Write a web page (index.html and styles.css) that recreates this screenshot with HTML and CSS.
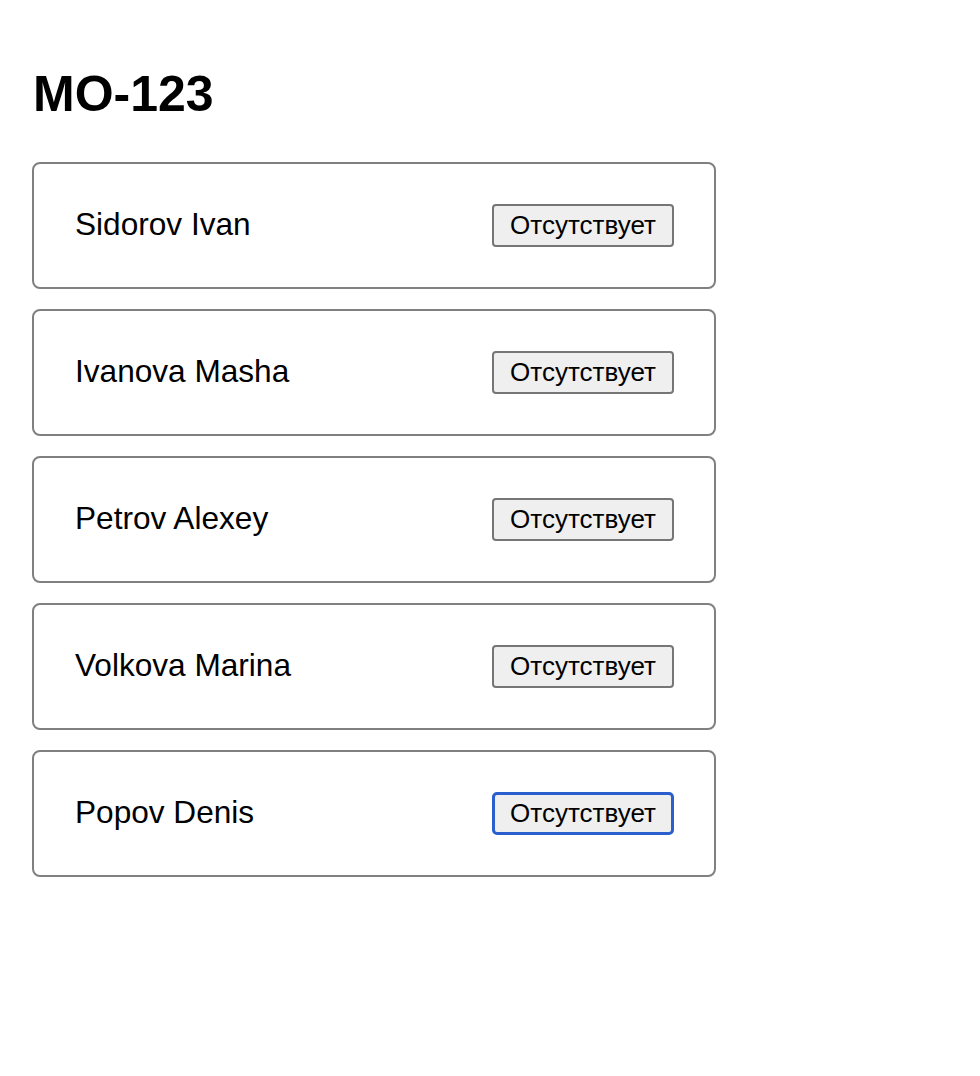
FILE: index.html
```html
<!DOCTYPE html>
<html lang="ru">
<head>
<meta charset="utf-8">
<title>MO-123</title>
<link rel="stylesheet" href="styles.css">
</head>
<body>
<main class="page">
  <h1 class="title">MO-123</h1>
  <ul class="list">
    <li class="card"><span class="name">Sidorov Ivan</span><button class="btn">Отсутствует</button></li>
    <li class="card"><span class="name">Ivanova Masha</span><button class="btn">Отсутствует</button></li>
    <li class="card"><span class="name">Petrov Alexey</span><button class="btn">Отсутствует</button></li>
    <li class="card"><span class="name">Volkova Marina</span><button class="btn">Отсутствует</button></li>
    <li class="card"><span class="name">Popov Denis</span><button class="btn btn-focus">Отсутствует</button></li>
  </ul>
</main>
</body>
</html>
```

FILE: styles.css
```css
html, body {
  margin: 0;
  padding: 0;
  background: #fff;
}
body {
  font-family: "Liberation Sans", Arial, sans-serif;
  color: #000;
}
.page {
  padding: 66px 32px 32px;
  width: 684px;
}
.title {
  margin: 0 0 39px;
  padding-left: 1px;
  font-size: 50px;
  line-height: 57px;
  font-weight: 700;
}
.list {
  list-style: none;
  margin: 0;
  padding: 0;
  display: flex;
  flex-direction: column;
  gap: 20px;
}
.card {
  box-sizing: border-box;
  height: 127px;
  border: 2px solid #808080;
  border-radius: 8px;
  padding: 0 40px 0 41px;
  display: flex;
  align-items: center;
  justify-content: space-between;
}
.name {
  font-size: 31.6px;
  line-height: 38px;
  padding-bottom: 4px;
}
.btn {
  box-sizing: border-box;
  height: 43px;
  width: 182px;
  padding: 0;
  font-family: "Liberation Sans", Arial, sans-serif;
  font-size: 26px;
  color: #000;
  background: #efefef;
  border: 2px solid #767676;
  border-radius: 4px;
}
.btn-focus {
  border: 3px solid #2b5fce;
  border-radius: 5px;
}
```
